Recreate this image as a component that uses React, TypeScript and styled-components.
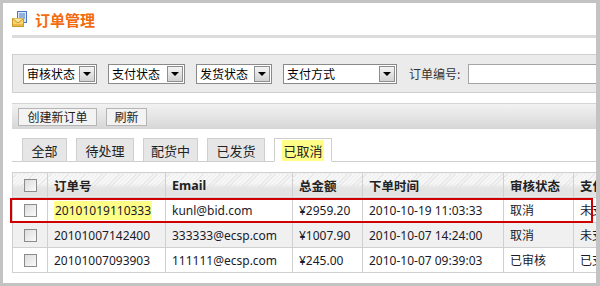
import React from "react";
import styled, { createGlobalStyle } from "styled-components";

const Global = createGlobalStyle`
  html, body { margin: 0; padding: 0; background: #fff; }
  body { font-family: "Noto Sans", "Noto Sans CJK SC", sans-serif; font-size: 12px; color: #111; }
`;

const Frame = styled.div`
  box-sizing: border-box;
  width: 600px;
  height: 286px;
  border: 3px solid #c3c3c3;
  border-right-width: 4px;
  overflow: hidden;
  background: #fff;
`;

const Inner = styled.div`
  width: 720px;
  padding-left: 9px;
`;

const TitleBar = styled.div`
  display: flex;
  align-items: center;
  gap: 7px;
  height: 32px;
  border-bottom: 3px solid #dcdcdc;
`;

const Title = styled.h1`
  margin: 0;
  font-family: "Noto Sans CJK SC", sans-serif;
  font-size: 15px;
  font-weight: 700;
  color: #f26b0f;
`;

const FilterBox = styled.div`
  margin-top: 16px;
  height: 37px;
  border: 1px solid #cfcfcf;
  background: #ebebeb;
  display: flex;
  align-items: center;
  padding-left: 10px;
  gap: 11px;
`;

const Select = styled.div<{ w: number }>`
  box-sizing: border-box;
  width: ${(p) => p.w}px;
  height: 20px;
  border: 1px solid #8a8a8a;
  background: #fff;
  display: flex;
  align-items: center;
  justify-content: space-between;
  padding: 1px 1px 1px 3px;
  font-family: "Noto Sans CJK SC", sans-serif;
  font-size: 12px;
  color: #000;
`;

const DropBtn = styled.span`
  box-sizing: border-box;
  width: 16px;
  height: 16px;
  border: 1px solid #8e8e8e;
  background: linear-gradient(#f4f4f4, #d2d2d2);
  display: flex;
  align-items: center;
  justify-content: center;
  &::after {
    content: "";
    border-left: 4px solid transparent;
    border-right: 4px solid transparent;
    border-top: 4px solid #000;
  }
`;

const Label = styled.span`
  font-family: "Noto Sans CJK SC", sans-serif;
  font-size: 12px;
  color: #333;
  margin-left: 1px;
`;

const TextInput = styled.div`
  box-sizing: border-box;
  width: 160px;
  height: 20px;
  border: 1px solid #a5a5a5;
  background: #fff;
  margin-left: -3px;
`;

const Toolbar = styled.div`
  margin-top: 10px;
  height: 26px;
  box-sizing: border-box;
  border-top: 1px solid #d4d4d4;
  background: linear-gradient(#f2f2f2 0%, #e6e6e6 45%, #d6d6d6 100%);
  display: flex;
  align-items: center;
  padding-left: 6px;
  gap: 9px;
`;

const ToolButton = styled.button<{ w: number }>`
  box-sizing: border-box;
  width: ${(p) => p.w}px;
  height: 18px;
  padding: 0;
  border: 1px solid #b5b5b5;
  background: #f3f3f3;
  font-family: "Noto Sans CJK SC", sans-serif;
  font-size: 12px;
  line-height: 16px;
  color: #222;
`;

const Tabs = styled.div`
  margin-top: 8px;
  display: flex;
  align-items: flex-end;
  gap: 9px;
  padding-left: 10px;
  border-bottom: 1px solid #cfcfcf;
  height: 24px;
`;

const Tab = styled.div<{ w: number; active?: boolean }>`
  box-sizing: border-box;
  width: ${(p) => p.w}px;
  height: 24px;
  margin-bottom: -1px;
  border: 1px solid #cfcfcf;
  border-bottom-color: ${(p) => (p.active ? "#fff" : "#cfcfcf")};
  background: ${(p) => (p.active ? "#fff" : "#e6e6e6")};
  display: flex;
  align-items: center;
  justify-content: center;
  font-family: "Noto Sans CJK SC", sans-serif;
  font-size: 13px;
  color: #222;
`;

const Mark = styled.span`
  background: #ffff88;
  padding: 1px 1px;
`;

const TableWrap = styled.div`
  position: relative;
  margin-top: 10px;
`;

const Table = styled.table`
  border-collapse: collapse;
  table-layout: fixed;
  font-family: "Noto Sans", "Noto Sans CJK SC", sans-serif;
  font-size: 12px;
  color: #1a1a2a;
`;

const Th = styled.th`
  height: 25px;
  box-sizing: border-box;
  border: 1px solid #d0d0d0;
  text-align: left;
  padding: 0 6px;
  font-family: "Noto Sans", "Noto Sans CJK SC", sans-serif;
  font-size: 12.5px;
  font-weight: 700;
  color: #222;
  background:
    linear-gradient(to bottom, rgba(232,232,232,0) 0%, rgba(232,232,232,0) 42%, #e4e4e4 62%, #e2e2e2 92%, #f4f4f4 100%),
    repeating-linear-gradient(135deg, #fafafa 0 2px, #e3e3e3 2px 3px);
`;

const Td = styled.td<{ shade?: boolean }>`
  height: 25px;
  box-sizing: border-box;
  border: 1px solid #d0d0d0;
  padding: 0 6px;
  white-space: nowrap;
  overflow: hidden;
  background: ${(p) => (p.shade ? "#f0f0f0" : "#fff")};
`;

const CheckCell = styled.div`
  display: flex;
  justify-content: center;
`;

const Check = styled.span`
  box-sizing: border-box;
  width: 13px;
  height: 13px;
  border: 1px solid #8c8c8c;
  background: linear-gradient(135deg, #dcdcdc, #fbfbfb);
`;

const RedBox = styled.div`
  position: absolute;
  left: -2px;
  top: 26px;
  width: 583px;
  height: 25px;
  box-sizing: border-box;
  border: 2px solid #d00000;
  pointer-events: none;
`;

const Icon = () => (
  <svg width="16" height="17" viewBox="0 0 16 17">
    <rect x="5.5" y="0.5" width="9" height="11" fill="#dbe8f8" stroke="#4a78c0" />
    <line x1="7" y1="3" x2="13" y2="3" stroke="#4a78c0" />
    <line x1="7" y1="5" x2="13" y2="5" stroke="#4a78c0" />
    <line x1="7" y1="7" x2="13" y2="7" stroke="#4a78c0" />
    <rect x="0.5" y="7.5" width="11" height="8" fill="#f7d36a" stroke="#c99a2a" />
    <path d="M0.5 7.5 L6 12 L11.5 7.5" fill="#fbe69a" stroke="#c99a2a" />
    <rect x="1" y="13" width="10" height="2" fill="#eab84a" />
  </svg>
);

const cols = [35, 118, 127, 70, 141, 70, 90];

const rows = [
  { no: "20101019110333", email: "kunl@bid.com", total: "¥2959.20", time: "2010-10-19 11:03:33", audit: "取消", pay: "未支付", mark: true },
  { no: "20101007142400", email: "333333@ecsp.com", total: "¥1007.90", time: "2010-10-07 14:24:00", audit: "取消", pay: "未支付" },
  { no: "20101007093903", email: "111111@ecsp.com", total: "¥245.00", time: "2010-10-07 09:39:03", audit: "已审核", pay: "已支付" },
];

export default function App() {
  return (
    <>
      <Global />
      <Frame>
        <Inner>
          <TitleBar>
            <Icon />
            <Title>订单管理</Title>
          </TitleBar>
          <FilterBox>
            <Select w={74}>审核状态<DropBtn /></Select>
            <Select w={77}>支付状态<DropBtn /></Select>
            <Select w={76}>发货状态<DropBtn /></Select>
            <Select w={114}>支付方式<DropBtn /></Select>
            <Label>订单编号:</Label>
            <TextInput />
          </FilterBox>
          <Toolbar>
            <ToolButton w={79}>创建新订单</ToolButton>
            <ToolButton w={41}>刷新</ToolButton>
          </Toolbar>
          <Tabs>
            <Tab w={45}>全部</Tab>
            <Tab w={58}>待处理</Tab>
            <Tab w={55}>配货中</Tab>
            <Tab w={58}>已发货</Tab>
            <Tab w={58} active><Mark>已取消</Mark></Tab>
          </Tabs>
          <TableWrap>
            <Table>
              <colgroup>
                {cols.map((c, i) => <col key={i} style={{ width: c }} />)}
              </colgroup>
              <thead>
                <tr>
                  <Th><CheckCell><Check /></CheckCell></Th>
                  <Th>订单号</Th>
                  <Th>Email</Th>
                  <Th>总金额</Th>
                  <Th>下单时间</Th>
                  <Th>审核状态</Th>
                  <Th>支付状态</Th>
                </tr>
              </thead>
              <tbody>
                {rows.map((r, i) => (
                  <tr key={r.no}>
                    <Td shade={i === 1}><CheckCell><Check /></CheckCell></Td>
                    <Td shade={i === 1}>{r.mark ? <Mark>{r.no}</Mark> : r.no}</Td>
                    <Td shade={i === 1}>{r.email}</Td>
                    <Td shade={i === 1}>{r.total}</Td>
                    <Td shade={i === 1}>{r.time}</Td>
                    <Td shade={i === 1}>{r.audit}</Td>
                    <Td shade={i === 1}>{r.pay}</Td>
                  </tr>
                ))}
              </tbody>
            </Table>
            <RedBox />
          </TableWrap>
        </Inner>
      </Frame>
    </>
  );
}
